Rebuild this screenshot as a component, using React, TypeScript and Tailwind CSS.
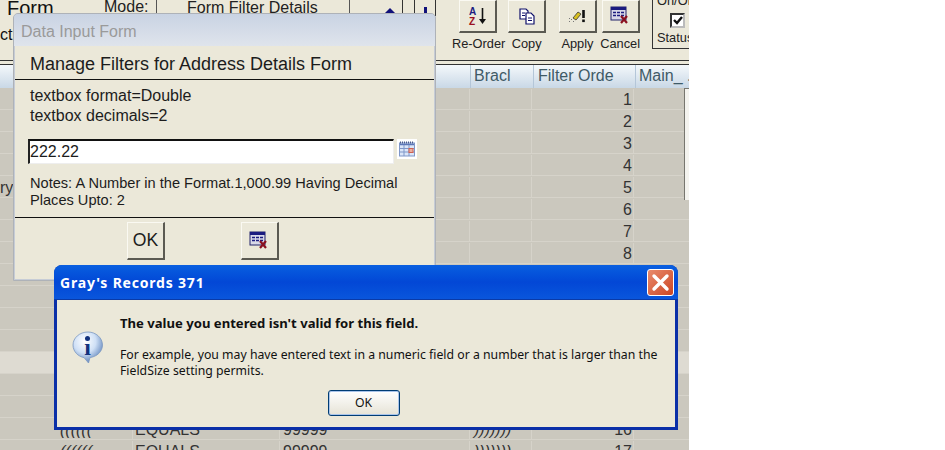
import React from 'react';

const RowCount = 17;

const CancelIcon = () => (
  <svg width="22" height="20" viewBox="0 0 22 20">
    <rect x="1" y="1" width="15" height="13" fill="#d8d8e8" stroke="#22226a" />
    <rect x="1" y="1" width="15" height="3" fill="#1c1c80" />
    <path d="M3 6.5h3M7 6.5h3M11 6.5h3M3 9.5h3M7 9.5h3M11 9.5h3" stroke="#1c1c80" strokeWidth="1.5" />
    <path d="M11 10l6 7M17 10l-6 7" stroke="#8a1020" strokeWidth="2.2" />
  </svg>
);

const RaisedButton = ({ className, children }: { className: string; children?: React.ReactNode }) => (
  <div className={`flex items-center justify-center bg-[#ebe8d9] border-t border-l border-t-[#faf9f2] border-l-[#faf9f2] border-r-2 border-b-2 border-r-[#5b5a52] border-b-[#5b5a52] ${className}`}>
    {children}
  </div>
);

const Toolbar = () => (
  <div className="h-[60px] bg-[#ebe8d9] flex items-start overflow-hidden relative">
    <div className="w-[104px] shrink-0">
      <div className="pl-[7px] -mt-[4px] text-[20px] leading-[24px] text-[#111]">Form</div>
      <div className="mt-[4px] text-[16px] leading-[22px] text-[#111]">ct</div>
    </div>
    <div className="w-[52px] shrink-0 -mt-[3px] text-[16px] leading-[20px] text-[#222]">Mode:</div>
    <div className="w-[194px] h-[17px] shrink-0 border-l border-r border-[#555] -mt-[2px] pl-[30px] text-[16px] leading-[19px] text-[#222] whitespace-nowrap overflow-hidden">Form Filter Details</div>
    <div className="w-[53px] h-[16px] shrink-0 border-r border-[#333] flex items-end justify-end pr-[6px]">
      <div className="w-0 h-0 border-l-[6px] border-r-[6px] border-b-[6px] border-l-transparent border-r-transparent border-b-[#10107a] mb-[2px]" />
    </div>
    <div className="w-[11px] shrink-0" />
    <div className="w-[22px] h-[16px] shrink-0 border-l border-r border-[#333] flex justify-center">
      <div className="w-[3px] h-[8px] bg-[#10107a] mt-[7px]" />
    </div>
    <div className="w-[23px] shrink-0" />
    <div className="w-[181px] shrink-0 flex flex-col">
      <div className="flex">
        <RaisedButton className="w-[38px] h-[33px]">
          <svg width="22" height="22" viewBox="0 0 22 22">
            <text x="2" y="10" fontFamily="Liberation Sans" fontWeight="700" fontSize="10" fill="#1c1c80">A</text>
            <text x="2" y="20" fontFamily="Liberation Sans" fontWeight="700" fontSize="10" fill="#9a1020">Z</text>
            <path d="M15.5 3v14" stroke="#111" strokeWidth="1.6" />
            <path d="M12 14h7l-3.500 5z" fill="#111" />
          </svg>
        </RaisedButton>
        <RaisedButton className="w-[38px] h-[33px] ml-[11px]">
          <svg width="18" height="18" viewBox="0 0 18 18">
            <path d="M2 2h6l2 2v8H2z" fill="#fff" stroke="#10106a" strokeWidth="1.2" />
            <path d="M8 6h5l3 3v8H8z" fill="#fff" stroke="#10106a" strokeWidth="1.2" />
            <path d="M4 6h3M4 8.500h3M10 11h4M10 13.500h4" stroke="#10106a" />
          </svg>
        </RaisedButton>
        <RaisedButton className="w-[38px] h-[33px] ml-[13px]">
          <svg width="22" height="18" viewBox="0 0 22 18">
            <path d="M2 15l1-1M4 13l1-1M2 12l1-1M6 15l1-1" stroke="#777" />
            <path d="M6 11l5-6 3 2-5 6z" fill="#d8c020" stroke="#333" strokeWidth=".8" />
            <path d="M16.500 3v8" stroke="#111" strokeWidth="2.600" />
            <rect x="15.200" y="12.500" width="2.600" height="2.600" fill="#111" />
          </svg>
        </RaisedButton>
        <RaisedButton className="w-[38px] h-[33px] ml-[5px]"><CancelIcon /></RaisedButton>
      </div>
      <div className="flex text-[12.8px] leading-[16px] text-[#222] mt-[3px] whitespace-nowrap -ml-[7px]">
        <span className="w-[60px]">Re-Order</span>
        <span className="w-[50px]">Copy</span>
        <span className="w-[39px]">Apply</span>
        <span>Cancel</span>
      </div>
    </div>
    <div className="w-[38px] h-[50px] shrink-0 ml-[12px] -mt-[1px] border-l border-b border-[#333] overflow-hidden">
      <div className="text-[12.8px] leading-[12px] -mt-[4px] pl-[4px] text-[#222] whitespace-nowrap">On/Off</div>
      <div className="w-[15px] h-[15px] ml-[17px] mt-[6px] border-2 border-t-[#333] border-l-[#333] border-r-[#bbb] border-b-[#bbb] bg-white flex items-center justify-center">
        <svg width="10" height="9" viewBox="0 0 10 9"><path d="M1 4l3 3 5-6" fill="none" stroke="#111" strokeWidth="2.400" /></svg>
      </div>
      <div className="text-[12.8px] leading-[16px] mt-[2px] pl-[4px] text-[#222] whitespace-nowrap">Status</div>
    </div>
  </div>
);

const Header = () => (
  <div className="flex h-[23px] bg-gradient-to-b from-[#f4f8fb] to-[#c9d8e6] text-[16px] leading-[22px] text-[#3f5a66] whitespace-nowrap overflow-hidden">
    <div className="w-[470px] shrink-0" />
    <div className="w-[63px] shrink-0 border-l border-[#b4c6d8] pl-[3px] overflow-hidden">Bracl</div>
    <div className="w-[102px] shrink-0 border-l border-[#b4c6d8] pl-[4px] overflow-hidden">Filter Orde</div>
    <div className="w-[51px] shrink-0 border-l border-[#b4c6d8] pl-[3px] overflow-hidden">Main_</div>
    <div className="shrink-0 pl-[1px]">.</div>
  </div>
);

const Rows = () => (
  <div className="relative">
    {Array.from({ length: RowCount }, (_, i) => i + 1).map((n) => (
      <div
        key={n}
        className={`flex h-[22px] pt-[1px] border-b border-[#d6d3ca] text-[16px] leading-[21px] text-[#333] whitespace-nowrap ${n === 13 ? 'bg-[#dedbd2]' : 'bg-[#cbc8be]'}`}
      >
        <div className="w-[55px] shrink-0 overflow-hidden">{n === 5 ? 'ry' : ''}</div>
        <div className="w-[78px] shrink-0 border-r border-[#d6d3ca] pl-[5px] italic">{n >= 16 ? '((((((' : ''}</div>
        <div className="w-[147px] shrink-0 border-r border-[#d6d3ca] pl-[2px]">{n >= 16 ? 'EQUALS' : ''}</div>
        <div className="w-[190px] shrink-0 border-r border-[#d6d3ca] pl-[3px]">{n >= 16 ? '99999' : ''}</div>
        <div className="w-[62px] shrink-0 border-r border-[#d6d3ca] pl-[4px] italic">{n >= 16 ? ')))))))' : ''}</div>
        <div className="w-[102px] shrink-0 border-r border-[#d6d3ca] pr-[1px] text-right">{n}</div>
        <div className="w-[50px] shrink-0" />
      </div>
    ))}
    <div className="absolute right-0 top-0 w-[5px] h-[112px] bg-[#f4f3ee] border-l border-t border-[#77766f]" />
  </div>
);

const DataInputForm = () => (
  <div className="absolute left-[13px] top-[13px] w-[423px] h-[268px] rounded-t-[5px] bg-[#c6ccd6] border border-[#aeb2b8] px-[1px] pb-[1px] flex flex-col overflow-hidden">
    <div className="h-[32px] shrink-0 -mx-[1px] bg-gradient-to-b from-[#c9d3e3] to-[#dfe4ec] pl-[7px] text-[16px] leading-[35px] text-[#9a9a9a]">Data Input Form</div>
    <div className="flex-1 bg-[#ebe8d9] text-[#1c1c1c] flex flex-col">
      <div className="h-[34px] shrink-0 border-b border-[#111] pl-[15px] text-[18px] leading-[36px] whitespace-nowrap">Manage Filters for Address Details Form</div>
      <div className="pl-[15px] pt-[6px] text-[16px] leading-[20px]">
        <div>textbox format=Double</div>
        <div>textbox decimals=2</div>
      </div>
      <div className="flex items-start pl-[13px] mt-[13px]">
        <div className="w-[366px] h-[25px] bg-white border-t-2 border-l-2 border-t-[#111] border-l-[#222] border-r border-b border-r-[#eee] border-b-[#eee] text-[16px] leading-[21px]">222.22</div>
        <div className="w-[20px] h-[20px] ml-[3px] bg-white flex items-center justify-center">
          <svg width="16" height="16" viewBox="0 0 16 16">
            <rect x="0.500" y="2" width="15" height="13" fill="#dbe6f8" stroke="#7f97c8" />
            <path d="M1 1.500h14" stroke="#4a5a8c" strokeWidth="2" strokeDasharray="1 1" />
            <path d="M1 3.500h14" stroke="#5d78b8" strokeWidth="1.500" />
            <path d="M5 4v11M10 4v11M1 7.500h14M1 11h14" stroke="#7f97c8" />
            <rect x="10" y="7.500" width="4" height="4" fill="#eab0a0" stroke="#d06050" />
          </svg>
        </div>
      </div>
      <div className="pl-[15px] pr-[20px] pt-[1px] mt-[10px] h-[44px] border-b border-[#111] text-[14.6px] leading-[17px]">
        Notes: A Number in the Format.1,000.99 Having Decimal Places Upto: 2
      </div>
      <div className="flex pt-[4px] pl-[112px]">
        <RaisedButton className="w-[38px] h-[38px] text-[17.6px]">OK</RaisedButton>
        <RaisedButton className="w-[38px] h-[38px] ml-[76px]"><CancelIcon /></RaisedButton>
      </div>
    </div>
  </div>
);

const InfoIcon = () => (
  <svg width="34" height="34" viewBox="0 0 34 34">
    <defs>
      <radialGradient id="bubble" cx="40%" cy="30%" r="75%">
        <stop offset="0%" stopColor="#ffffff" />
        <stop offset="50%" stopColor="#cfe0f6" />
        <stop offset="100%" stopColor="#5279b4" />
      </radialGradient>
    </defs>
    <path d="M17 2C8.500 2 2 8 2 15c0 6.500 5 11.500 11 12.600L17.500 33l1.500-5.400C26 26.600 31.500 21.500 31.500 15 31.500 8 25 2 17 2z" fill="url(#bubble)" stroke="#7b98c2" strokeWidth=".8" />
    <circle cx="16.500" cy="8.500" r="2.500" fill="#12327e" />
    <text x="16.500" y="25" textAnchor="middle" fontFamily="Liberation Serif" fontWeight="700" fontSize="24" fill="#12327e">ı</text>
  </svg>
);

const MessageBox = () => (
  <div className="absolute left-[54px] top-[265px] w-[624px] h-[165px] rounded-t-[8px] bg-[#0a2fa8] flex flex-col overflow-hidden">
    <div className="h-[35px] shrink-0 bg-gradient-to-b from-[#0a5fe0] via-[#0347d6] to-[#0a56dc] flex items-center justify-between pl-[6px] pr-[4px] border-b border-[#0a3aa8]">
      <span className="font-['Noto_Sans'] font-bold text-[14px] tracking-[0.8px] text-white">Gray's Records 371</span>
      <div className="w-[27px] h-[27px] rounded-[3px] border border-white bg-gradient-to-br from-[#e88a6c] to-[#cc4420] flex items-center justify-center">
        <svg width="19" height="19" viewBox="0 0 19 19"><path d="M3 3l13 13M16 3L3 16" stroke="#fff" strokeWidth="3.400" strokeLinecap="round" /></svg>
      </div>
    </div>
    <div className="flex-1 mx-[3px] mb-[3px] bg-[#ebe8d9] flex flex-col text-[#111] font-['Noto_Sans']">
      <div className="flex flex-1">
        <div className="w-[63px] shrink-0 pt-[30px] pl-[14px]"><InfoIcon /></div>
        <div className="pt-[14px] whitespace-nowrap">
          <div className="font-bold text-[13.1px] leading-[18px]">The value you entered isn't valid for this field.</div>
          <div className="mt-[15px] text-[12.28px] leading-[16px]">
            <div>For example, you may have entered text in a numeric field or a number that is larger than the</div>
            <div>FieldSize setting permits.</div>
          </div>
        </div>
      </div>
      <div className="flex justify-center pb-[11px] pr-[5px]">
        <div className="w-[72px] h-[26px] rounded-[3px] border border-[#003c74] bg-gradient-to-b from-[#fff] to-[#e6e3d6] shadow-[inset_0_0_0_1px_#a9c4ea] text-center text-[12.28px] leading-[24px]">OK</div>
      </div>
    </div>
  </div>
);

export default function App() {
  return (
    <div className="w-[945px] h-[450px] bg-white overflow-hidden font-['Liberation_Sans',sans-serif]">
      <div className="relative w-[689px] h-[450px] overflow-hidden bg-[#cbc8be]">
        <Toolbar />
        <div className="h-[5px] bg-[#ebe8d9] border-t border-b border-[#333]" />
        <Header />
        <Rows />
        <DataInputForm />
        <MessageBox />
      </div>
    </div>
  );
}
